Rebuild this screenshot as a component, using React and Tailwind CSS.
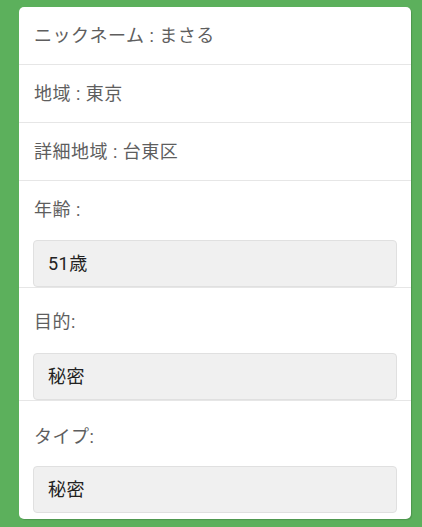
export default function App() {
  const rows = ["ニックネーム : まさる", "地域 : 東京", "詳細地域 : 台東区"];
  return (
    <div className="min-h-[527px] bg-[#5cb05c] pt-[7px] pb-[9px] pl-[19px] pr-[11px] font-['Roboto','Noto_Sans_CJK_JP',sans-serif] tracking-[0.5px]">
      <div className="bg-white rounded-[5px] shadow-[1px_1px_1px_rgba(0,0,0,0.15)] overflow-hidden">
        {rows.map((r) => (
          <div
            key={r}
            className="h-[58px] flex items-center px-[15px] text-[18px] text-[#5e5e5e] border-b border-[#e6e6e6]"
          >
            {r}
          </div>
        ))}
        <div className="pt-[17px] px-[14px] border-b border-[#e6e6e6] -mb-px">
          <div className="h-[24px] leading-[24px] text-[18px] text-[#5e5e5e] pl-px">年齢 :</div>
          <div className="mt-[18px] h-[47px] flex items-center px-[14px] bg-[#f0f0f0] border border-[#e0e0e0] rounded-[4px] text-[18px] text-[#222]">
            51歳
          </div>
        </div>
        <div className="pt-[23px] px-[14px] border-b border-[#e6e6e6] -mb-px">
          <div className="h-[24px] leading-[24px] text-[18px] text-[#5e5e5e] pl-px">目的:</div>
          <div className="mt-[19px] h-[47px] flex items-center px-[14px] bg-[#f0f0f0] border border-[#e0e0e0] rounded-[4px] text-[18px] text-[#222]">
            秘密
          </div>
        </div>
        <div className="pt-[25px] pb-[6px] px-[14px]">
          <div className="h-[24px] leading-[24px] text-[18px] text-[#5e5e5e] pl-px">タイプ:</div>
          <div className="mt-[17px] h-[47px] flex items-center px-[14px] bg-[#f0f0f0] border border-[#e0e0e0] rounded-[4px] text-[18px] text-[#222]">
            秘密
          </div>
        </div>
      </div>
    </div>
  );
}
